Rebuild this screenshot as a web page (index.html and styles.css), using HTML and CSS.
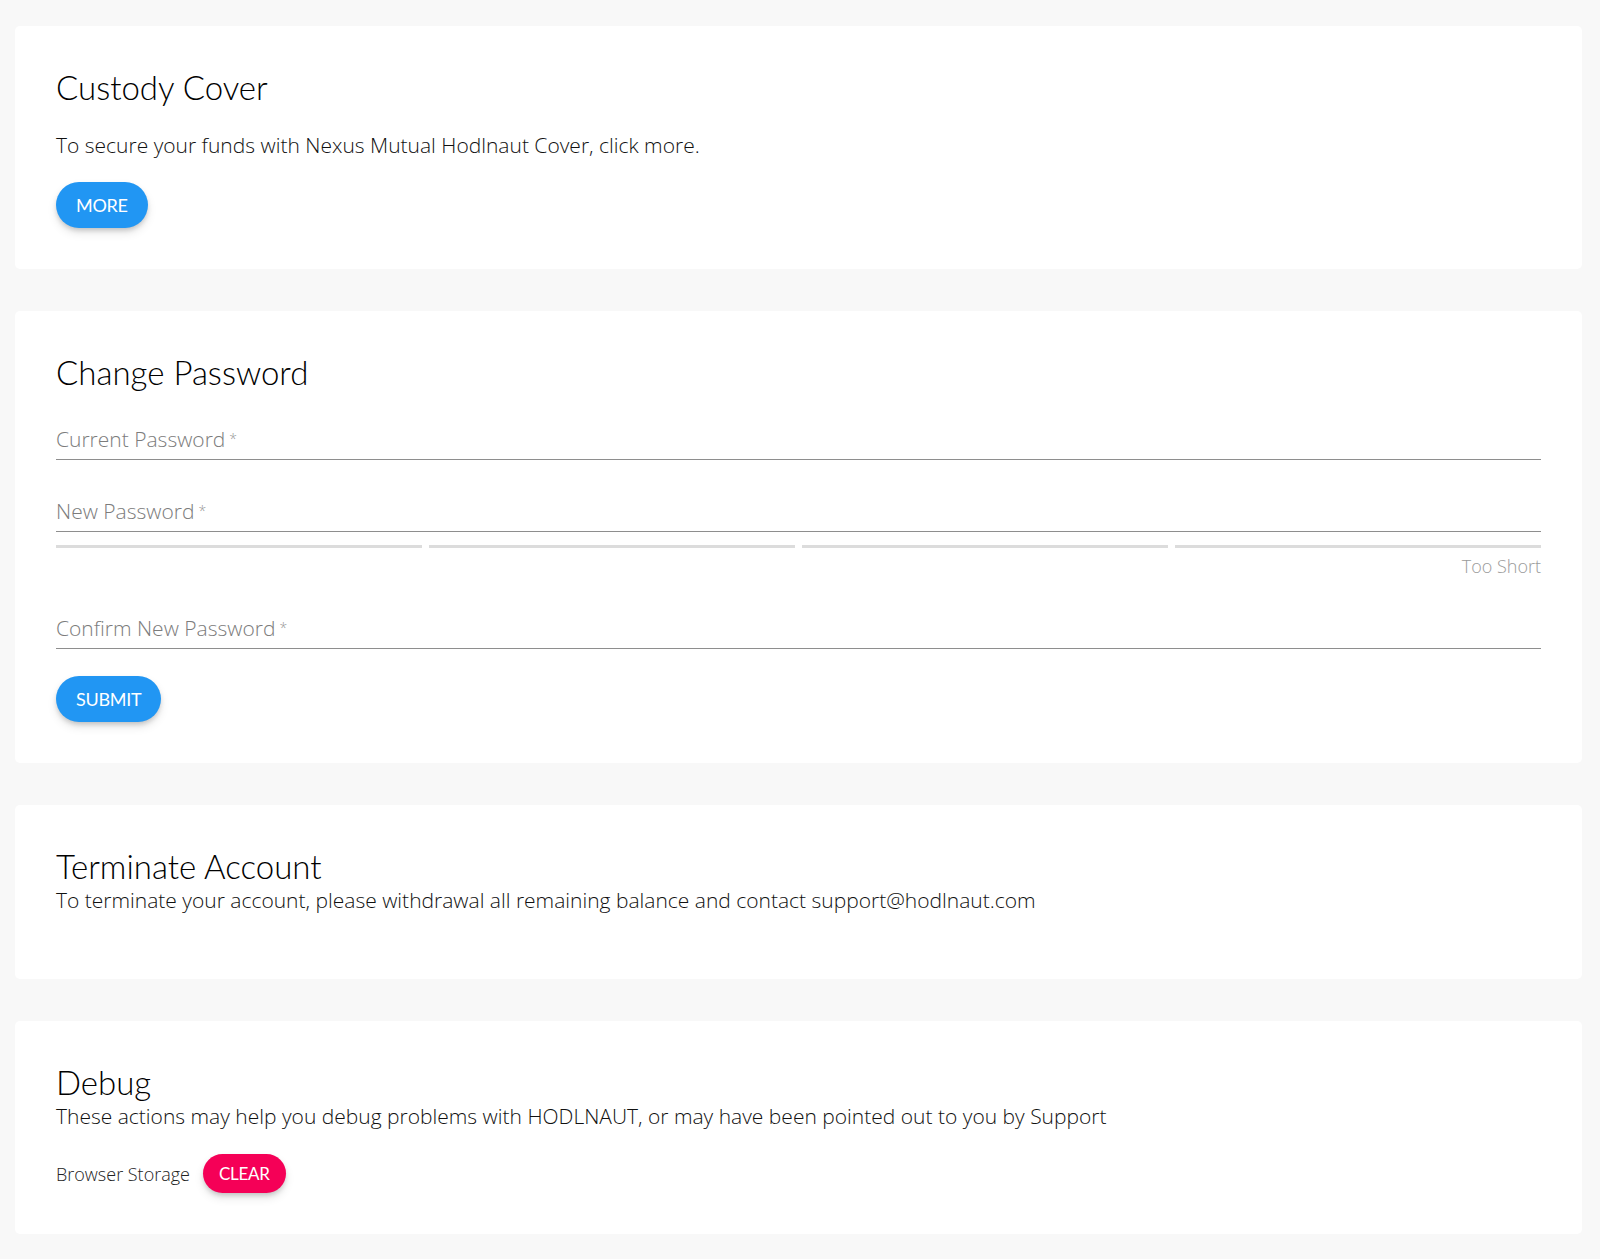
FILE: index.html
```html
<!DOCTYPE html>
<html lang="en">
<head>
  <meta charset="UTF-8">
  <meta name="viewport" content="width=device-width, initial-scale=1.0">
  <title>Account Settings</title>
  <link rel="stylesheet" href="styles.css">
</head>
<body>
  <div class="card">
    <h2>Custody Cover</h2>
    <p class="lead">To secure your funds with Nexus Mutual Hodlnaut Cover, click more.</p>
    <button class="btn">More</button>
  </div>

  <div class="card">
    <h2>Change Password</h2>
    <div class="field first">
      <label for="current">Current Password<span class="req">*</span></label>
      <input type="password" id="current">
    </div>
    <div class="field">
      <label for="newpw">New Password<span class="req">*</span></label>
      <input type="password" id="newpw">
    </div>
    <div class="strength">
      <span></span><span></span><span></span><span></span>
    </div>
    <div class="strength-text">Too Short</div>
    <div class="field confirm">
      <label for="confirm">Confirm New Password<span class="req">*</span></label>
      <input type="password" id="confirm">
    </div>
    <button class="btn submit">Submit</button>
  </div>

  <div class="card">
    <h2>Terminate Account</h2>
    <p class="tight">To terminate your account, please withdrawal all remaining balance and contact support@hodlnaut.com</p>
  </div>

  <div class="card last">
    <h2>Debug</h2>
    <p class="tight">These actions may help you debug problems with HODLNAUT, or may have been pointed out to you by Support</p>
    <div class="debug-row">
      <span>Browser Storage</span>
      <button class="btn small pink">Clear</button>
    </div>
  </div>
</body>
</html>
```

FILE: styles.css
```css
body {
  margin: 26px 18px 23px 15px;
  background-color: #f8f8f8;
  font-family: "Open Sans", Lato, sans-serif;
  color: #111;
}
.card {
  background-color: white;
  border-radius: 5px;
  padding: 41px;
  margin-bottom: 42px;
}
.card.last {
  margin-bottom: 0;
}
h2 {
  font-family: Lato, "Open Sans", sans-serif;
  font-size: 33px;
  font-weight: 300;
  line-height: 40px;
  margin: 0;
  color: #000;
}
p {
  font-size: 21px;
  font-weight: 300;
  line-height: 28px;
  color: #111;
  margin: 0;
}
.lead {
  margin-top: 24px;
  margin-bottom: 23px;
}
.tight {
  margin: 0 0 24px;
}
.btn {
  display: inline-block;
  height: 46px;
  padding: 0 20px;
  border: none;
  border-radius: 23px;
  background-color: #2196f3;
  color: white;
  font-family: Lato, sans-serif;
  font-size: 18px;
  font-weight: 400;
  letter-spacing: -0.3px;
  text-transform: uppercase;
  cursor: pointer;
  box-shadow: 0 3px 5px -1px rgba(0, 0, 0, 0.18), 0 5px 10px rgba(0, 0, 0, 0.1);
}
.btn.small {
  height: 39px;
  padding: 0 16px;
  border-radius: 20px;
  font-size: 17px;
}
.btn.pink {
  background-color: #f50057;
}
.field {
  margin-top: 37px;
  border-bottom: 1px solid #8e8e8e;
  padding-bottom: 6px;
}
.field.first {
  margin-top: 33px;
}
.field.confirm {
  margin-top: 36px;
}
.field label {
  display: block;
  font-size: 21px;
  font-weight: 300;
  line-height: 28px;
  color: #7c7c7c;
}
.field input {
  display: none;
}
.req {
  font-size: 14px;
  margin-left: 4px;
  vertical-align: 3px;
  color: #999;
}
.strength {
  display: grid;
  grid-template-columns: repeat(4, 1fr);
  gap: 7px;
  margin-top: 13px;
}
.strength span {
  height: 3px;
  background-color: #dcdcdc;
}
.strength-text {
  text-align: right;
  font-size: 18px;
  font-weight: 300;
  line-height: 24px;
  color: #9a9a9a;
  margin-top: 6px;
}
.submit {
  margin-top: 27px;
}
.debug-row {
  display: flex;
  align-items: center;
  gap: 13px;
  font-size: 18px;
  font-weight: 300;
  color: #222;
}
```
